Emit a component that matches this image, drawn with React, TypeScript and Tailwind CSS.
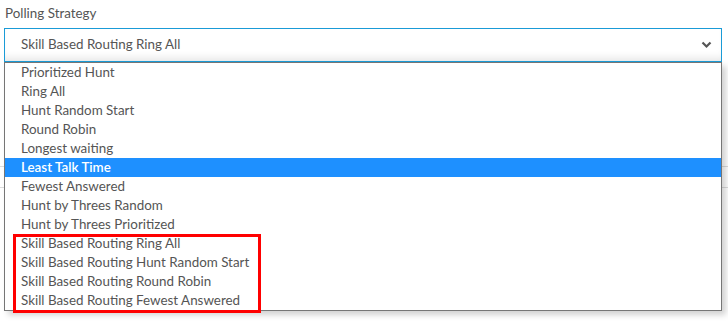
import React from 'react';

const OPTIONS = [
  'Prioritized Hunt',
  'Ring All',
  'Hunt Random Start',
  'Round Robin',
  'Longest waiting',
  'Least Talk Time',
  'Fewest Answered',
  'Hunt by Threes Random',
  'Hunt by Threes Prioritized',
  'Skill Based Routing Ring All',
  'Skill Based Routing Hunt Random Start',
  'Skill Based Routing Round Robin',
  'Skill Based Routing Fewest Answered',
];

const SELECTED = 'Least Talk Time';

export default function App() {
  return (
    <div className="relative w-[728px] h-[322px] bg-white overflow-hidden font-['Lato',sans-serif] text-[13.4px] text-[#555]">
      <div className="px-[4px] pt-[4px]">
        <label className="block pl-[1px] h-[24px] leading-[18px]">Polling Strategy</label>
        <div className="relative h-[34px] w-[718px] border border-[#1a9bd7] bg-white shadow-[inset_0_-8px_10px_-6px_rgba(0,0,0,0.12)] flex items-center pl-[16px] pb-[1px]">
          <span>Skill Based Routing Ring All</span>
          <svg className="absolute right-[9px] top-[12px]" width="11" height="8" viewBox="0 0 11 8">
            <path d="M1.5 1.5 L5.5 5.5 L9.5 1.5" fill="none" stroke="#555" strokeWidth="2.2" />
          </svg>
        </div>
      </div>

      {/* page content under the open list */}
      <div className="mt-[104px] border-t border-[#dcdcdc]" />
      <div className="mt-[20px] border-t border-[#dcdcdc]" />

      {/* open option list */}
      <div className="absolute left-[4px] top-[62px] w-[718px] bg-white border border-[#767676] shadow-[4px_4px_6px_rgba(0,0,0,0.18)]">
        {OPTIONS.map(opt => (
          <div
            key={opt}
            className={`h-[19px] leading-[18px] pl-[16px] ${opt === SELECTED ? 'bg-[#1e90ff] text-white font-semibold' : ''}`}
          >
            {opt}
          </div>
        ))}
      </div>

      {/* annotation */}
      <div className="absolute left-[13px] top-[234px] w-[248px] h-[79px] border-[3px] border-[#ff0000]" />
    </div>
  );
}
